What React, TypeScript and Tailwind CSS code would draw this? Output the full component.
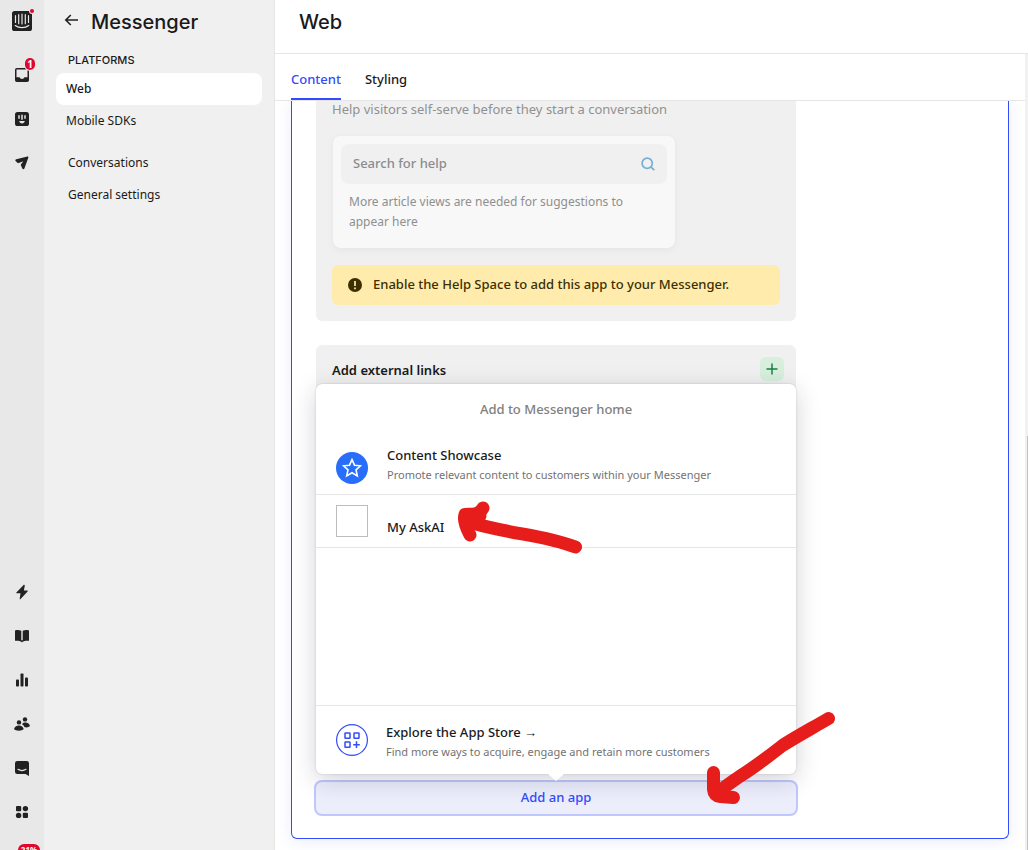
import React from "react";

const INK = "#222222";

function LogoIcon() {
  return (
    <svg width="20" height="20" viewBox="0 0 20 20" aria-hidden="true">
      <rect width="20" height="20" rx="2.6" fill={INK} />
      <g stroke="#e8e8e8" strokeWidth="1.2" strokeLinecap="round" fill="none">
        <path d="M3.500 4.700v6.800M6.700 3.500v9.200M10 3.200v9.800M13.300 3.500v9.200M16.500 4.700v6.800" />
        <path d="M3.200 14.600c3.800 2.800 9.800 2.800 13.600 0" />
      </g>
    </svg>
  );
}

function InboxIcon() {
  return (
    <svg width="14" height="14" viewBox="0 0 14 14" aria-hidden="true">
      <path
        fill={INK}
        fillRule="evenodd"
        d="M1.800 0h10.400A1.800 1.800 0 0 1 14 1.800v10.400a1.800 1.800 0 0 1-1.800 1.800H1.800A1.800 1.800 0 0 1 0 12.200V1.800A1.800 1.800 0 0 1 1.800 0ZM1.500 1.500v7.700H4.600c.4 1 1.300 1.700 2.400 1.700s2-.7 2.400-1.700h3.100V1.500Z"
      />
    </svg>
  );
}

function FinIcon() {
  return (
    <svg width="14" height="14" viewBox="0 0 14 14" aria-hidden="true">
      <rect width="14" height="14" rx="2.6" fill={INK} />
      <g stroke="#e8e8e8" strokeWidth="1.500" fill="none">
        <path d="M4 3.200v3.600M7 2.800v5M10 3.200v3.600" />
      </g>
      <path d="M4.200 9h5.600c-.3 1.600-1.400 2.400-2.800 2.400S4.500 10.600 4.200 9Z" fill="#e8e8e8" />
    </svg>
  );
}

function SendIcon() {
  return (
    <svg width="14" height="14" viewBox="0 0 14 14" aria-hidden="true">
      <path
        d="M12.400.5 1.300 3.200C.2 3.500 0 4.600.8 5.300L3 7.300 8.300 5.300 5.700 8.700 7.300 12.600c.4 1 1.700 1 2.100 0L13.400 1.600c.2-.7-.3-1.200-1-1.100Z"
        fill={INK}
      />
    </svg>
  );
}

function BoltIcon() {
  return (
    <svg width="14" height="16" viewBox="0 0 14 16" aria-hidden="true">
      <path
        d="M8.600 1 1.400 8.400c-.3.400-.1.900.4.900h3.700L4.700 14.700c0 .6.500.7.900.3l7-7.500c.3-.4.100-.9-.4-.9H8.900L9.800 1.400c0-.6-.8-.8-1.200-.4Z"
        fill={INK}
      />
    </svg>
  );
}

function BookIcon() {
  return (
    <svg width="14" height="14" viewBox="0 0 14 14" aria-hidden="true">
      <path
        d="M0 1.400C2 .8 4.300.8 6.300 1.800v11C4.500 11.600 2 11.600 0 11.800ZM14 1.400C12 .8 9.700.8 7.700 1.800v11c1.800-1.200 4.300-1.200 6.300-1Z"
        fill={INK}
      />
      <path d="M5 11.200h4L7 13.400Z" fill={INK} />
    </svg>
  );
}

function ChartIcon() {
  return (
    <svg width="14" height="14" viewBox="0 0 14 14" aria-hidden="true">
      <g fill={INK}>
        <rect x="1" y="6.500" width="3" height="7" rx="0.8" />
        <rect x="5.500" y="0.500" width="3" height="13" rx="0.8" />
        <rect x="10" y="4.500" width="3" height="9" rx="0.8" />
      </g>
    </svg>
  );
}

function PeopleIcon() {
  return (
    <svg width="16" height="14" viewBox="0 0 16 14" aria-hidden="true">
      <g fill={INK}>
        <circle cx="11" cy="2.400" r="2.200" />
        <path d="M8 7.200c.6-1.300 1.700-1.800 3.200-1.800 2.600 0 4.500 1.500 4.800 3.700-1.200 1.300-3.600 1.600-5.600 1C10.100 8.800 9.300 7.700 8 7.200Z" />
        <circle cx="5" cy="5.400" r="2.200" />
        <path d="M0 12c.4-2.100 2.400-3.600 4.900-3.600s4.400 1.500 4.800 3.600c-1.300 2.200-8.300 2.200-9.700 0Z" />
      </g>
    </svg>
  );
}

function ChatIcon() {
  return (
    <svg width="14" height="15" viewBox="0 0 14 15" aria-hidden="true">
      <path d="M2.300 0h9.400A2.300 2.300 0 0 1 14 2.300V15l-3.600-2H2.300A2.300 2.300 0 0 1 0 10.700V2.300A2.300 2.300 0 0 1 2.300 0Z" fill={INK} />
      <path d="M3 8.300c2.400 1.500 5.600 1.500 8 0" stroke="#e8e8e8" strokeWidth="1.200" strokeLinecap="round" fill="none" />
    </svg>
  );
}

function AppsIcon() {
  return (
    <svg width="14" height="14" viewBox="0 0 14 14" aria-hidden="true">
      <g fill={INK}>
        <rect x="1" y="1" width="5.200" height="5.200" rx="1" />
        <circle cx="10.400" cy="3.600" r="2.700" />
        <circle cx="3.600" cy="10.400" r="2.700" />
        <rect x="7.800" y="7.800" width="5.200" height="5.200" rx="1" />
      </g>
    </svg>
  );
}

function RailLink({ label, children }: { label: string; children: React.ReactNode }) {
  return (
    <a href="#" aria-label={label} className="relative flex h-11 w-11 items-center justify-center">
      {children}
    </a>
  );
}

function Rail() {
  return (
    <nav aria-label="Main" className="flex w-11 shrink-0 flex-col bg-[#e8e8e8]">
      <a href="#" aria-label="Home" className="relative flex h-[53px] justify-center pt-[11px]">
        <LogoIcon />
        <span className="absolute top-[9px] right-[10px] h-1 w-1 rounded-full bg-[#e0062f] ring-1 ring-[#e8e8e8]" />
      </a>
      <RailLink label="Inbox">
        <InboxIcon />
        <span className="absolute top-[5px] right-[9px] flex h-3 w-[10px] items-center justify-center rounded-full bg-[#e0062f] text-[10px] font-bold text-white ring-1 ring-[#e8e8e8]">
          1
        </span>
      </RailLink>
      <RailLink label="Fin AI">
        <FinIcon />
      </RailLink>
      <RailLink label="Outbound">
        <SendIcon />
      </RailLink>
      <div className="mt-auto flex flex-col">
        <RailLink label="Automation"><BoltIcon /></RailLink>
        <RailLink label="Articles"><BookIcon /></RailLink>
        <RailLink label="Reports"><ChartIcon /></RailLink>
        <RailLink label="Contacts"><PeopleIcon /></RailLink>
        <RailLink label="Messenger"><ChatIcon /></RailLink>
        <RailLink label="App store"><AppsIcon /></RailLink>
        <div className="flex h-4 justify-end overflow-hidden pt-[10px] pr-1">
          <span className="flex h-3 w-[22px] shrink-0 items-center justify-center rounded-full bg-[#e0062f] text-[8px] font-bold text-white">
            21%
          </span>
        </div>
      </div>
    </nav>
  );
}

function Sidebar() {
  return (
    <aside className="flex w-[231px] shrink-0 flex-col border-r border-[#e6e6e6] bg-[#f0f0f0] px-3">
      <div className="flex h-11 items-center gap-3 pl-2">
        <button type="button" aria-label="Back" className="pb-1">
          <svg width="15" height="14" viewBox="0 0 15 14" aria-hidden="true">
            <path d="M6.800 2 1.800 7l5 5M2 7h12" fill="none" stroke={INK} strokeWidth="1.600" />
          </svg>
        </button>
        <h1 className="font-[Inter,sans-serif] text-[20px] leading-6 font-medium">Messenger</h1>
      </div>
      <h2 className="mt-2 pl-3 font-[Inter,sans-serif] text-[11px] leading-4 font-medium">PLATFORMS</h2>
      <nav aria-label="Messenger" className="mt-[5px] flex flex-col text-[12px]">
        <a href="#" aria-current="page" className="flex h-8 items-center rounded-lg bg-white px-[10px] font-medium">Web</a>
        <a href="#" className="flex h-8 items-center px-[10px]">Mobile SDKs</a>
        <a href="#" className="mt-[10px] flex h-8 items-center px-3">Conversations</a>
        <a href="#" className="flex h-8 items-center px-3">General settings</a>
      </nav>
    </aside>
  );
}

function HelpPanel() {
  return (
    <section className="w-[480px] rounded-b-md bg-[#f0f0f0] px-4 pb-4">
      <p className="text-[13px] leading-4 text-[#919191]">Help visitors self-serve before they start a conversation</p>
      <div className="mt-[19px] ml-px w-[342px] rounded-lg bg-[#f8f8f8] p-2 pb-4 shadow-[0_2px_8px_rgba(0,0,0,0.05)]">
        <div className="flex h-10 items-center rounded-lg bg-[#f0f0f0] px-3">
          <input
            aria-label="Search for help"
            placeholder="Search for help"
            className="min-w-0 flex-1 bg-transparent text-[13px] font-medium outline-none placeholder:text-[#8c8c8c]"
          />
          <svg width="14" height="14" viewBox="0 0 14 14" aria-hidden="true">
            <g fill="none" stroke="#74b0d6" strokeWidth="1.700">
              <circle cx="6.200" cy="6.200" r="5.100" />
              <path d="m9.900 9.900 3.300 3.300" />
            </g>
          </svg>
        </div>
        <p className="mt-2 px-2 text-[12px] leading-5 text-[#8f8f8f]">More article views are needed for suggestions to appear here</p>
      </div>
      <div className="mt-[17px] flex h-10 items-center gap-[11px] rounded-md bg-[#ffecad] px-4 text-[13px] font-medium text-[#3d2f00]">
        <svg width="14" height="14" viewBox="0 0 14 14" aria-hidden="true">
          <circle cx="7" cy="7" r="7" fill="#3d2f00" />
          <path d="M7 3v5M7 9.500v1.800" stroke="#ffecad" strokeWidth="1.700" />
        </svg>
        Enable the Help Space to add this app to your Messenger.
      </div>
    </section>
  );
}

function LinksPanel() {
  return (
    <section className="mt-6 h-[413px] w-[480px] rounded-md bg-[#f0f0f0] py-3 pr-3 pl-4">
      <div className="flex h-6 items-center justify-between">
        <h3 className="pt-1 text-[13px] font-semibold">Add external links</h3>
        <button type="button" aria-label="Add external link" className="flex h-6 w-6 items-center justify-center rounded-md bg-[#d7efdc]">
          <svg width="12" height="12" viewBox="0 0 12 12" aria-hidden="true">
            <path d="M6 .5v11M.5 6h11" stroke="#1d8044" strokeWidth="1.500" />
          </svg>
        </button>
      </div>
    </section>
  );
}

function AppPicker() {
  return (
    <div
      role="dialog"
      aria-label="Add to Messenger home"
      className="absolute bottom-full left-0 mb-2 flex h-[390px] w-full flex-col rounded-md bg-white text-left shadow-[0_0_2px_rgba(0,0,0,0.2),0_6px_24px_rgba(30,30,60,0.2)]"
    >
      <h3 className="pt-[15px] pb-[9px] text-center text-[13px] leading-5 font-medium text-[#808080]">Add to Messenger home</h3>
      <a href="#" className="flex h-[67px] items-center gap-[19px] border-b border-[#e6e6e6] px-5">
        <span className="mt-[14px] flex h-8 w-8 items-center justify-center rounded-full bg-[#286efa]">
          <svg width="20" height="20" viewBox="0 0 20 20" aria-hidden="true">
            <path
              d="m10 1.600 2.500 5.600 6.100.6-4.600 4.100 1.300 6L10 14.800l-5.300 3.100 1.300-6L1.400 7.800l6.100-.6Z"
              fill="none"
              stroke="#fff"
              strokeWidth="1.600"
            />
          </svg>
        </span>
        <span className="flex flex-col pt-2">
          <span className="text-[13px] leading-5 font-medium">Content Showcase</span>
          <span className="text-[11px] leading-5 text-[#737373]">Promote relevant content to customers within your Messenger</span>
        </span>
      </a>
      <a href="#" className="flex h-[53px] items-center gap-[19px] border-b border-[#e6e6e6] px-5">
        <span className="h-8 w-8 border border-[#bdbdbd]" />
        <span className="pt-3 text-[13px] leading-5 font-medium">My AskAI</span>
      </a>
      <a href="#" className="mt-auto flex h-[69px] items-center gap-[18px] border-t border-[#e6e6e6] px-5 pb-px">
        <svg width="32" height="32" viewBox="0 0 32 32" aria-hidden="true">
          <g fill="none" stroke="#334bfa">
            <circle cx="16" cy="16" r="15.400" strokeWidth="1.200" />
            <g strokeWidth="1.500">
              <rect x="9" y="9" width="5" height="5.300" rx="0.500" />
              <rect x="18" y="9" width="5" height="5.300" rx="0.500" />
              <rect x="9" y="18" width="5" height="5.300" rx="0.500" />
              <path d="M20.500 17.300v6.800M17.200 20.700h6.600" />
            </g>
          </g>
        </svg>
        <span className="flex flex-col pt-1">
          <span className="text-[13px] leading-5 font-medium">Explore the App Store →</span>
          <span className="text-[11px] leading-5 text-[#737373]">Find more ways to acquire, engage and retain more customers</span>
        </span>
      </a>
      <svg width="16" height="8" viewBox="0 0 16 8" aria-hidden="true" className="absolute top-full left-1/2 -translate-x-1/2">
        <path d="M0 0h16L8 7Z" fill="#fff" />
      </svg>
    </div>
  );
}

export default function App() {
  return (
    <div className="relative flex h-screen overflow-hidden bg-white font-['Noto_Sans','Open_Sans',sans-serif] text-[#1a1a1a]">
      <Rail />
      <Sidebar />
      <main className="flex min-w-0 flex-1 flex-col">
        <header className="flex h-[54px] shrink-0 items-start border-b border-[#e6e6e6] px-6 pt-[10px]">
          <h2 className="font-[Inter,sans-serif] text-[20px] leading-6 font-medium">Web</h2>
        </header>
        <div className="flex min-h-0 flex-1">
          <div className="flex min-w-0 flex-1 flex-col">
            <div role="tablist" className="flex h-[47px] shrink-0 gap-6 border-b border-[#e6e6e6] px-4 text-[13px] font-medium">
              <button type="button" role="tab" aria-selected="true" className="border-b-2 border-[#334bfa] pt-2 text-[#334bfa]">
                Content
              </button>
              <button type="button" role="tab" aria-selected="false" className="border-b-2 border-transparent pt-2">
                Styling
              </button>
            </div>
            <div className="min-h-0 flex-1 overflow-hidden px-4">
              <div className="rounded-b-md border-x border-b border-[#334bfa] px-6 pb-6 shadow-[0_2px_16px_rgba(51,75,250,0.1)]">
                <HelpPanel />
                <LinksPanel />
                <div className="relative mt-6 w-[480px]">
                  <button
                    type="button"
                    className="block h-8 w-full rounded-md bg-[#eceefc] text-center text-[13px] font-medium text-[#334bfa] ring-2 ring-[#bfc7fd]"
                  >
                    Add an app
                  </button>
                  <AppPicker />
                </div>
              </div>
            </div>
          </div>
          <div className="flex w-[3px] shrink-0 flex-col items-end bg-[#f1f1f1]">
            <span className="mt-auto h-[414px] w-px bg-[#c1c1c1]" />
          </div>
        </div>
      </main>
      <svg width="140" height="60" viewBox="450 498 140 60" aria-hidden="true" className="pointer-events-none absolute top-[498px] left-[450px]">
        <g fill="none" stroke="#e71d1c" strokeWidth="13" strokeLinecap="round" strokeLinejoin="round">
          <path d="M575.500 547c-34-13-62-12-103-24" />
          <path d="M483 508c-4 7-10 6-18 6.500-2 6 1.500 14 5 20.500" />
          <path d="M465 519l15-3" />
        </g>
      </svg>
      <svg width="140" height="100" viewBox="700 708 140 100" aria-hidden="true" className="pointer-events-none absolute top-[708px] left-[700px]">
        <g fill="none" stroke="#e71d1c" strokeWidth="13" strokeLinecap="round" strokeLinejoin="round">
          <path d="M828.500 718.500c-17 10-32 18-46 27-14 11-27 21-43 31-10 7-18 12-23 18" />
          <path d="M713.500 772.500v17c.5 5 3 6.500 7 7l13 1" />
        </g>
      </svg>
    </div>
  );
}
